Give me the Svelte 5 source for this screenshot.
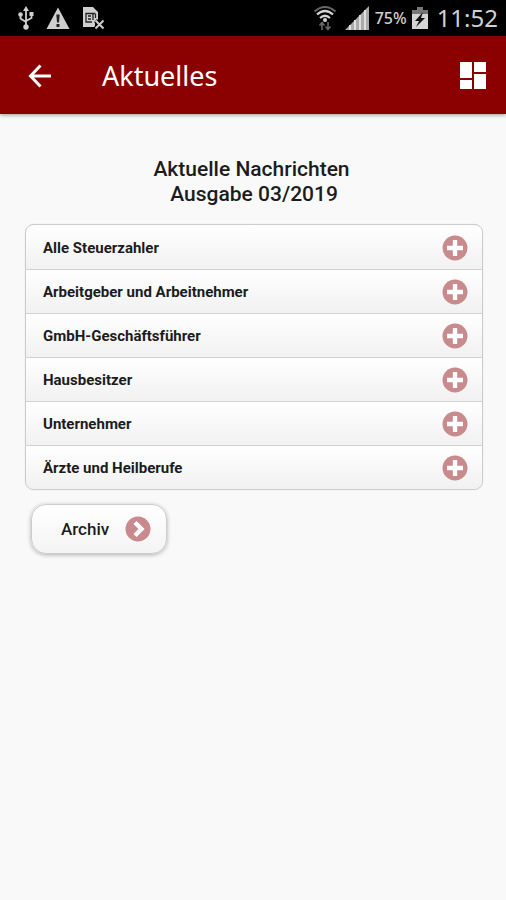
<script>
  const topics = [
    'Alle Steuerzahler',
    'Arbeitgeber und Arbeitnehmer',
    'GmbH-Geschäftsführer',
    'Hausbesitzer',
    'Unternehmer',
    'Ärzte und Heilberufe'
  ];
  let open = $state(-1);
</script>

<div class="screen">
  <div class="status">
    <div class="group left">
      <svg width="16" height="24" viewBox="0 0 16 24" fill="none" stroke="#cfcfcf" stroke-width="1.8">
        <path d="M8 4v16M2.5 9v3.5L8 16M13.500 8v4L8 15" />
        <path d="M8 0l3 5H5zM11.500 6h4v4h-4z" fill="#cfcfcf" stroke="none" />
        <circle cx="2.500" cy="8.500" r="2.300" fill="#cfcfcf" stroke="none" />
        <circle cx="8" cy="21" r="2.700" fill="#cfcfcf" stroke="none" />
      </svg>
      <svg width="24" height="24" viewBox="0 0 24 24">
        <path d="M12 1.500L23.500 23H.5z" fill="#cfcfcf" />
        <path d="M10.300 8.500h3.400l-.7 8h-2zM10.500 18h3v3h-3z" fill="#222" />
      </svg>
      <svg width="24" height="24" viewBox="0 0 24 24">
        <path d="M1 1h10l5 5v8l-3 3v4H1z" fill="#cfcfcf" />
        <path d="M3.500 7.500h10M4 7v9h6M6 10h3M6 13h3M11 8v6M13.500 8v4" fill="none" stroke="#222" stroke-width="1.300" />
        <path d="M13.500 14.500l8 8M21.500 14.500l-8 8" stroke="#000" stroke-width="4" />
        <path d="M13.500 14.500l8 8M21.500 14.500l-8 8" stroke="#cfcfcf" stroke-width="2" />
      </svg>
    </div>
    <div class="group right">
      <svg width="24" height="26" viewBox="0 0 24 26" fill="none">
        <path d="M1.500 6.500Q12-2.500 22.500 6.500" stroke="#666" stroke-width="2" />
        <path d="M4 9.500Q12 2.500 20 9.500" stroke="#d4d4d4" stroke-width="2.200" />
        <path d="M7 13Q12 8.500 17 13" stroke="#d4d4d4" stroke-width="2.200" />
        <circle cx="12" cy="15" r="2" fill="#d4d4d4" />
        <path d="M9 25v-7M6.500 20.500L9 17.500l2.500 3M15 17v7M12.500 21.500l2.500 3 2.500-3" stroke="#666" stroke-width="1.600" />
      </svg>
      <svg class="signal" width="26" height="26" viewBox="0 0 26 26">
        <path d="M25 1v24H1z" fill="#aaa" />
        <path d="M6 20v5M11 15v10M16 10v15M21 5v20" stroke="#dedede" stroke-width="2" />
      </svg>
      <span class="percent">75%</span>
      <svg class="battery" width="16" height="24" viewBox="0 0 16 24">
        <path d="M5 1h6v3h5v7H0V4h5z" fill="#777" />
        <path d="M0 8h16v15H0z" fill="#d4d4d4" />
        <path d="M11 6l-8 9h4l-3 6 9-9H9z" fill="#111" />
      </svg>
      <span class="clock">11:52</span>
    </div>
  </div>

  <header>
    <button class="icon" aria-label="Zurück">
      <svg width="24" height="24" viewBox="0 0 24 24" fill="none" stroke="#fff" stroke-width="3">
        <path d="M12.500 1.500L2.500 12l10 10.500M2.500 12H23" />
      </svg>
    </button>
    <h1>Aktuelles</h1>
    <button class="icon" aria-label="Übersicht">
      <svg width="28" height="28" viewBox="0 0 28 28" fill="#fff">
        <path d="M1 0h12v16H1zM15 0h12v10H15zM1 18h12v9H1zM15 12h12v15H15z" />
      </svg>
    </button>
  </header>

  <main>
    <h2>Aktuelle Nachrichten<br />&nbsp;Ausgabe 03/2019</h2>
    <ul>
      {#each topics as topic, i}
        <li>
          <button class="row" aria-expanded={open === i} onclick={() => (open = open === i ? -1 : i)}>
            <span>{topic}</span>
            <svg width="26" height="26" viewBox="0 0 26 26">
              <circle cx="13" cy="13" r="12.500" fill="#c98a8d" />
              <path d="M13 5v16M5 13h16" stroke="#fff" stroke-width="4.400" />
            </svg>
          </button>
        </li>
      {/each}
    </ul>
    <button class="archive">
      <span>Archiv</span>
      <svg width="26" height="26" viewBox="0 0 26 26">
        <circle cx="13" cy="13" r="12.500" fill="#c98a8d" />
        <path d="M10 6.500l6.500 6.500-6.500 6.500" fill="none" stroke="#fff" stroke-width="4.400" />
      </svg>
    </button>
  </main>
</div>

<style>
  :global(body) {
    background: #f9f9f9;
  }
  .screen {
    min-height: 100vh;
    background: #f9f9f9;
    color: #1c1c1c;
    font-family: Roboto, 'Liberation Sans', sans-serif;
  }
  svg {
    display: block;
    flex: none;
  }
  button {
    margin: 0;
    border: 0;
    font: inherit;
    color: inherit;
    cursor: pointer;
  }
  .status {
    display: flex;
    justify-content: space-between;
    align-items: center;
    height: 36px;
    padding: 0 8px 0 18px;
    background: #000;
    color: #d0d0d0;
  }
  .group {
    display: flex;
    align-items: center;
  }
  .left {
    gap: 12px;
  }
  .signal {
    margin-left: 7px;
  }
  .percent {
    margin-left: 5px;
    font: 500 16px/24px 'Noto Sans', sans-serif;
  }
  .battery {
    margin-left: 5px;
  }
  .clock {
    margin-left: 9px;
    font: 400 24px/36px 'Noto Sans', sans-serif;
  }
  header {
    display: flex;
    align-items: center;
    height: 76px;
    padding: 2px 19px 0 28px;
    background: #8b0000;
    color: #fff;
    box-shadow: 0 1px 4px rgba(0, 0, 0, 0.4);
  }
  .icon {
    padding: 0;
    background: none;
  }
  h1 {
    flex: 1;
    margin: 0 0 0 50px;
    font: 400 27px/36px 'Noto Sans', sans-serif;
  }
  main {
    padding: 43px 23px 43px 25px;
  }
  h2 {
    margin: 0 0 17px;
    padding-right: 5px;
    font-size: 21px;
    line-height: 25px;
    font-weight: 500;
    text-align: center;
  }
  ul {
    margin: 0;
    padding: 1px 0 0;
    list-style: none;
    background: #fff;
    border: 1px solid #ccc;
    border-radius: 9px;
    overflow: hidden;
    box-shadow: 0 0 1px rgba(0, 0, 0, 0.2);
  }
  li + li {
    border-top: 1px solid #d2d2d2;
  }
  .row {
    display: flex;
    justify-content: space-between;
    align-items: center;
    width: 100%;
    height: 43px;
    padding: 0 14px 0 17px;
    background: linear-gradient(#fff, #f1f1f1);
    font-size: 15px;
    font-weight: 700;
    text-align: left;
  }
  .archive {
    display: flex;
    align-items: center;
    gap: 16px;
    height: 50px;
    margin: 14px 0 0 6px;
    padding: 0 15px 0 29px;
    border: 1px solid #ccc;
    border-radius: 15px;
    background: linear-gradient(#fff, #f4f4f4);
    box-shadow: 0 1px 4px rgba(0, 0, 0, 0.3);
    font-size: 17px;
    font-weight: 500;
  }
</style>
